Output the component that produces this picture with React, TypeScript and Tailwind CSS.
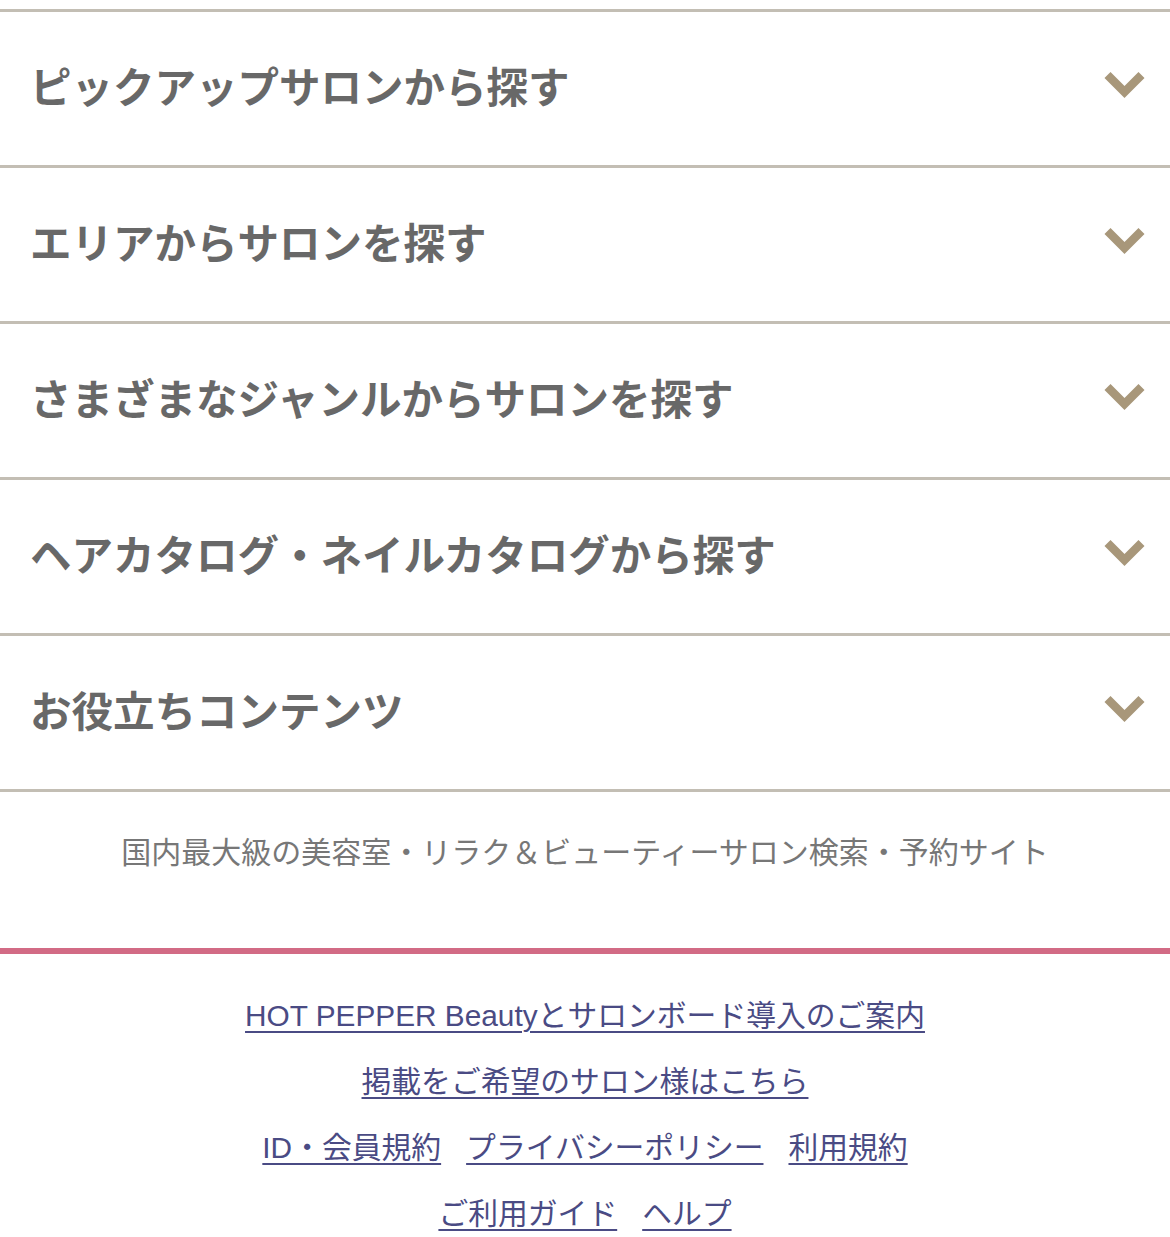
import React from 'react'

const sections = [
  'ピックアップサロンから探す',
  'エリアからサロンを探す',
  'さまざまなジャンルからサロンを探す',
  'ヘアカタログ・ネイルカタログから探す',
  'お役立ちコンテンツ',
]

const Chevron: React.FC = () => (
  <svg width="43" height="30" viewBox="0 0 43 30" fill="none" className="shrink-0">
    <polyline
      points="4.5,4 21.5,21 38.5,4"
      stroke="#a8977a"
      strokeWidth="8.5"
      strokeLinecap="butt"
      strokeLinejoin="miter"
    />
  </svg>
)

const FooterLink: React.FC<{ children: React.ReactNode }> = ({ children }) => (
  <a
    href="#"
    className="text-[#4a4b84] underline decoration-2 underline-offset-[5px]"
  >
    {children}
  </a>
)

export default function App() {
  return (
    <div
      className="w-[1170px] min-h-[1237px] bg-white pt-[9px]"
      style={{ fontFamily: '"Liberation Sans", "Noto Sans CJK JP", sans-serif' }}
    >
      {sections.map((title) => (
        <div
          key={title}
          className="h-[156px] border-t-[3px] border-[#c3beb4] flex items-center justify-between pl-[30px] pr-[24px] pb-[6px]"
        >
          <span
            className="text-[41.5px] font-bold text-[#686868]"
            style={{ fontFamily: '"Noto Sans CJK JP", sans-serif' }}
          >
            {title}
          </span>
          <Chevron />
        </div>
      ))}

      <div className="h-[159px] border-t-[3px] border-[#c3beb4] pt-[38px] text-center">
        <p
          className="text-[30px] leading-[40px] text-[#777777]"
          style={{ fontFamily: '"Noto Sans CJK JP", sans-serif' }}
        >
          国内最大級の美容室・リラク＆ビューティーサロン検索・予約サイト
        </p>
      </div>

      <div className="h-[6px] bg-[#d26b85]" />

      <div className="pt-[29px] flex flex-col items-center text-[29.8px] leading-[66px]">
        <div>
          <FooterLink>HOT PEPPER Beautyとサロンボード導入のご案内</FooterLink>
        </div>
        <div>
          <FooterLink>掲載をご希望のサロン様はこちら</FooterLink>
        </div>
        <div className="flex gap-[25px]">
          <FooterLink>ID・会員規約</FooterLink>
          <FooterLink>プライバシーポリシー</FooterLink>
          <FooterLink>利用規約</FooterLink>
        </div>
        <div className="flex gap-[25px]">
          <FooterLink>ご利用ガイド</FooterLink>
          <FooterLink>ヘルプ</FooterLink>
        </div>
      </div>
    </div>
  )
}
